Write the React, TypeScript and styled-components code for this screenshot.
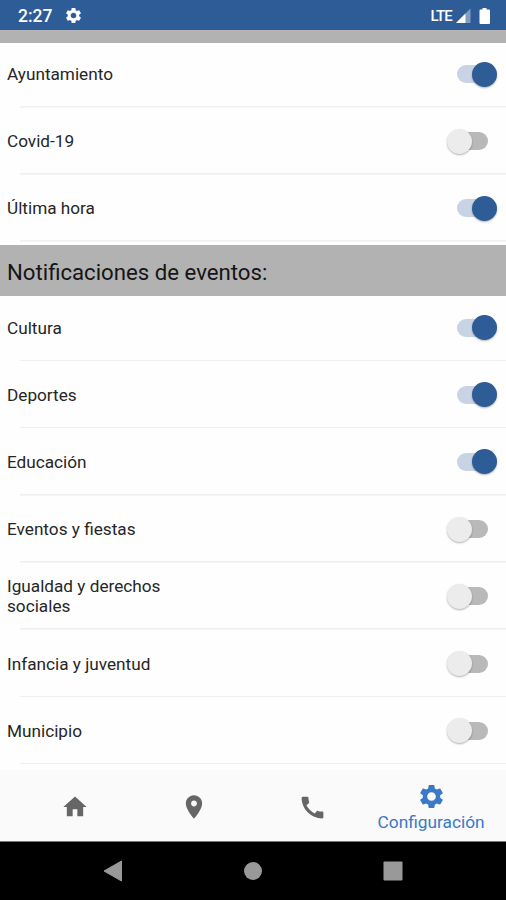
import React from "react";
import styled, { createGlobalStyle } from "styled-components";

const GlobalStyle = createGlobalStyle`
  * { box-sizing: border-box; }
  body { margin: 0; background: #fff; font-family: Roboto, "Liberation Sans", sans-serif; }
`;

const Screen = styled.div`
  width: 506px;
  height: 900px;
  display: flex;
  flex-direction: column;
  overflow: hidden;
  background: #fefefe;
`;

const StatusBar = styled.header`
  height: 30px;
  flex: none;
  display: flex;
  align-items: center;
  padding: 1px 15px 0 18px;
  background: #2d5c97;
  color: #fff;
`;

const Clock = styled.span`
  width: 46px;
  font-size: 17.5px;
  font-weight: 500;
  line-height: 28px;
`;

const Network = styled.span`
  margin-left: auto;
  margin-right: 4px;
  font-size: 15px;
  font-weight: 500;
  letter-spacing: -0.8px;
  line-height: 28px;
`;

const StatusIcon = styled.svg<{ $gap?: number }>`
  flex: none;
  margin-left: ${(p) => p.$gap ?? 0}px;
`;

const Content = styled.main`
  height: 740px;
  flex: none;
  overflow: hidden;
`;

const ClippedHeading = styled.div`
  height: 12.5px;
  background: #b2b2b2;
`;

const Heading = styled.h2`
  height: 51px;
  margin: 3.3px 0 0;
  padding: 3px 7px 0;
  display: flex;
  align-items: center;
  background: #b2b2b2;
  color: #151515;
  font-size: 22.2px;
  font-weight: 400;
`;

const List = styled.ul`
  margin: 0;
  padding: 0;
  list-style: none;
`;

const Row = styled.li`
  height: 67.2px;
  display: flex;
  align-items: center;
  justify-content: space-between;
  padding: 0 7px;
  background: linear-gradient(#f0f0f0, #f0f0f0) 20px 100% / 100% 1.6px no-repeat;

  &:first-child {
    height: 65px;
    padding-bottom: 2px;
  }
`;

const Label = styled.span`
  width: 170px;
  color: #262626;
  font-size: 17.2px;
  line-height: 20px;
`;

const Track = styled.span<{ $on: boolean }>`
  width: 36px;
  height: 18px;
  margin-right: ${(p) => (p.$on ? 6.5 : 11.5)}px;
  border-radius: 9px;
  display: flex;
  align-items: center;
  justify-content: ${(p) => (p.$on ? "flex-end" : "flex-start")};
  background: ${(p) => (p.$on ? "#c8d4e4" : "#b9b9b9")};
`;

const Thumb = styled.span<{ $on: boolean }>`
  width: 25px;
  height: 25px;
  flex: none;
  border-radius: 50%;
  margin: 0 ${(p) => (p.$on ? -4 : 0)}px 0 ${(p) => (p.$on ? 0 : -5)}px;
  background: ${(p) => (p.$on ? "#2d5c97" : "#ececec")};
  box-shadow: 0 1px 2px rgba(0, 0, 0, 0.3);
`;

const TabBar = styled.nav`
  height: 72px;
  flex: none;
  display: grid;
  grid-template-columns: repeat(4, 118.6px);
  padding-left: 16px;
  background: #fafafa;
  border-bottom: 1px solid #777;
`;

const Tab = styled.a<{ $active?: boolean }>`
  display: flex;
  flex-direction: column;
  align-items: center;
  padding-top: ${(p) => (p.$active ? 12 : 22.5)}px;
  color: ${(p) => (p.$active ? "#3b78c8" : "#666")};
`;

const TabLabel = styled.span`
  margin-top: 1px;
  font-size: 17.3px;
  line-height: 20px;
`;

const SystemNav = styled.footer`
  height: 58px;
  flex: none;
  display: flex;
  justify-content: center;
  align-items: center;
  gap: 121px;
  background: #000;
`;

const paths = {
  home: "M10 20v-6h4v6h5v-8h3L12 3 2 12h3v8z",
  place: "M12 2C8.13 2 5 5.13 5 9c0 5.25 7 13 7 13s7-7.75 7-13c0-3.87-3.13-7-7-7zm0 9.5c-1.38 0-2.5-1.12-2.5-2.5s1.12-2.5 2.5-2.5 2.5 1.12 2.5 2.5-1.12 2.5-2.5 2.5z",
  call: "M20.01 15.38c-1.23 0-2.42-.2-3.53-.56-.35-.12-.74-.03-1.01.24l-1.57 1.97c-2.83-1.35-5.48-3.9-6.89-6.83l1.95-1.66c.27-.28.35-.67.24-1.02-.37-1.11-.56-2.3-.56-3.53 0-.54-.45-.99-.99-.99H4.19C3.65 3 3 3.24 3 3.99 3 13.28 10.73 21 20.01 21c.71 0 .99-.63.99-1.18v-3.45c0-.54-.45-.99-.99-.99z",
  settings: "M19.14 12.94c.04-.3.06-.61.06-.94 0-.32-.02-.64-.07-.94l2.03-1.58c.18-.14.23-.41.12-.61l-1.92-3.32c-.12-.22-.37-.29-.59-.22l-2.39.96c-.5-.38-1.03-.7-1.62-.94l-.36-2.54c-.04-.24-.24-.41-.48-.41h-3.84c-.24 0-.43.17-.47.41l-.36 2.54c-.59.24-1.13.57-1.62.94l-2.39-.96c-.22-.08-.47 0-.59.22L2.74 8.87c-.12.21-.08.47.12.61l2.03 1.58c-.05.3-.09.63-.09.94s.02.64.07.94l-2.03 1.58c-.18.14-.23.41-.12.61l1.92 3.32c.12.22.37.29.59.22l2.39-.96c.5.38 1.03.7 1.62.94l.36 2.54c.05.24.24.41.48.41h3.84c.24 0 .44-.17.47-.41l.36-2.54c.59-.24 1.13-.56 1.62-.94l2.39.96c.22.08.47 0 .59-.22l1.92-3.32c.12-.22.07-.47-.12-.61l-2.01-1.58zM12 15.6c-1.98 0-3.6-1.62-3.6-3.6s1.62-3.6 3.6-3.6 3.6 1.62 3.6 3.6-1.62 3.6-3.6 3.6z",
};

type IconName = keyof typeof paths;

function Glyph({ name, size }: { name: IconName; size: number }) {
  return (
    <StatusIcon width={size} height={size} viewBox="0 0 24 24" fill="currentColor">
      <path d={paths[name]} />
    </StatusIcon>
  );
}

interface Topic {
  name: string;
  on: boolean;
}

const news: Topic[] = [
  { name: "Ayuntamiento", on: true },
  { name: "Covid-19", on: false },
  { name: "Última hora", on: true },
];

const events: Topic[] = [
  { name: "Cultura", on: true },
  { name: "Deportes", on: true },
  { name: "Educación", on: true },
  { name: "Eventos y fiestas", on: false },
  { name: "Igualdad y derechos sociales", on: false },
  { name: "Infancia y juventud", on: false },
  { name: "Municipio", on: false },
];

function TopicList({ topics }: { topics: Topic[] }) {
  return (
    <List>
      {topics.map((t) => (
        <Row key={t.name}>
          <Label>{t.name}</Label>
          <Track $on={t.on} role="switch" aria-checked={t.on} aria-label={t.name}>
            <Thumb $on={t.on} />
          </Track>
        </Row>
      ))}
    </List>
  );
}

export default function App() {
  return (
    <>
      <GlobalStyle />
      <Screen>
        <StatusBar>
          <Clock>2:27</Clock>
          <Glyph name="settings" size={19} />
          <Network>LTE</Network>
          <StatusIcon width="15" height="16" viewBox="0 0 15 16">
            <path d="M14.500 0.500V15H0Z" fill="#fff" fillOpacity="0.4" />
            <path d="M9.500 5.500V15H0Z" fill="#fff" />
          </StatusIcon>
          <StatusIcon $gap={8} width="12" height="18" viewBox="0 0 12 18">
            <path d="M3.5 1h4v1.500H10q1 0 1 1V16q0 1-1 1H1.500q-1 0-1-1V3.500q0-1 1-1h2z" fill="#fff" />
          </StatusIcon>
        </StatusBar>
        <Content>
          <ClippedHeading />
          <TopicList topics={news} />
          <Heading>Notificaciones de eventos:</Heading>
          <TopicList topics={events} />
        </Content>
        <TabBar>
          <Tab aria-label="Inicio"><Glyph name="home" size={28} /></Tab>
          <Tab aria-label="Mapa"><Glyph name="place" size={28} /></Tab>
          <Tab aria-label="Teléfono"><Glyph name="call" size={29} /></Tab>
          <Tab $active>
            <Glyph name="settings" size={29} />
            <TabLabel>Configuración</TabLabel>
          </Tab>
        </TabBar>
        <SystemNav>
          <svg width="20" height="22" viewBox="0 0 20 22"><path d="M18.500 1V21L1 11Z" fill="#999" stroke="#999" strokeLinejoin="round" /></svg>
          <svg width="18" height="18" viewBox="0 0 18 18"><circle cx="9" cy="9" r="9" fill="#999" /></svg>
          <svg width="20" height="20" viewBox="0 0 20 20"><rect x="0.5" y="0.5" width="19" height="19" rx="1" fill="#999" /></svg>
        </SystemNav>
      </Screen>
    </>
  );
}
